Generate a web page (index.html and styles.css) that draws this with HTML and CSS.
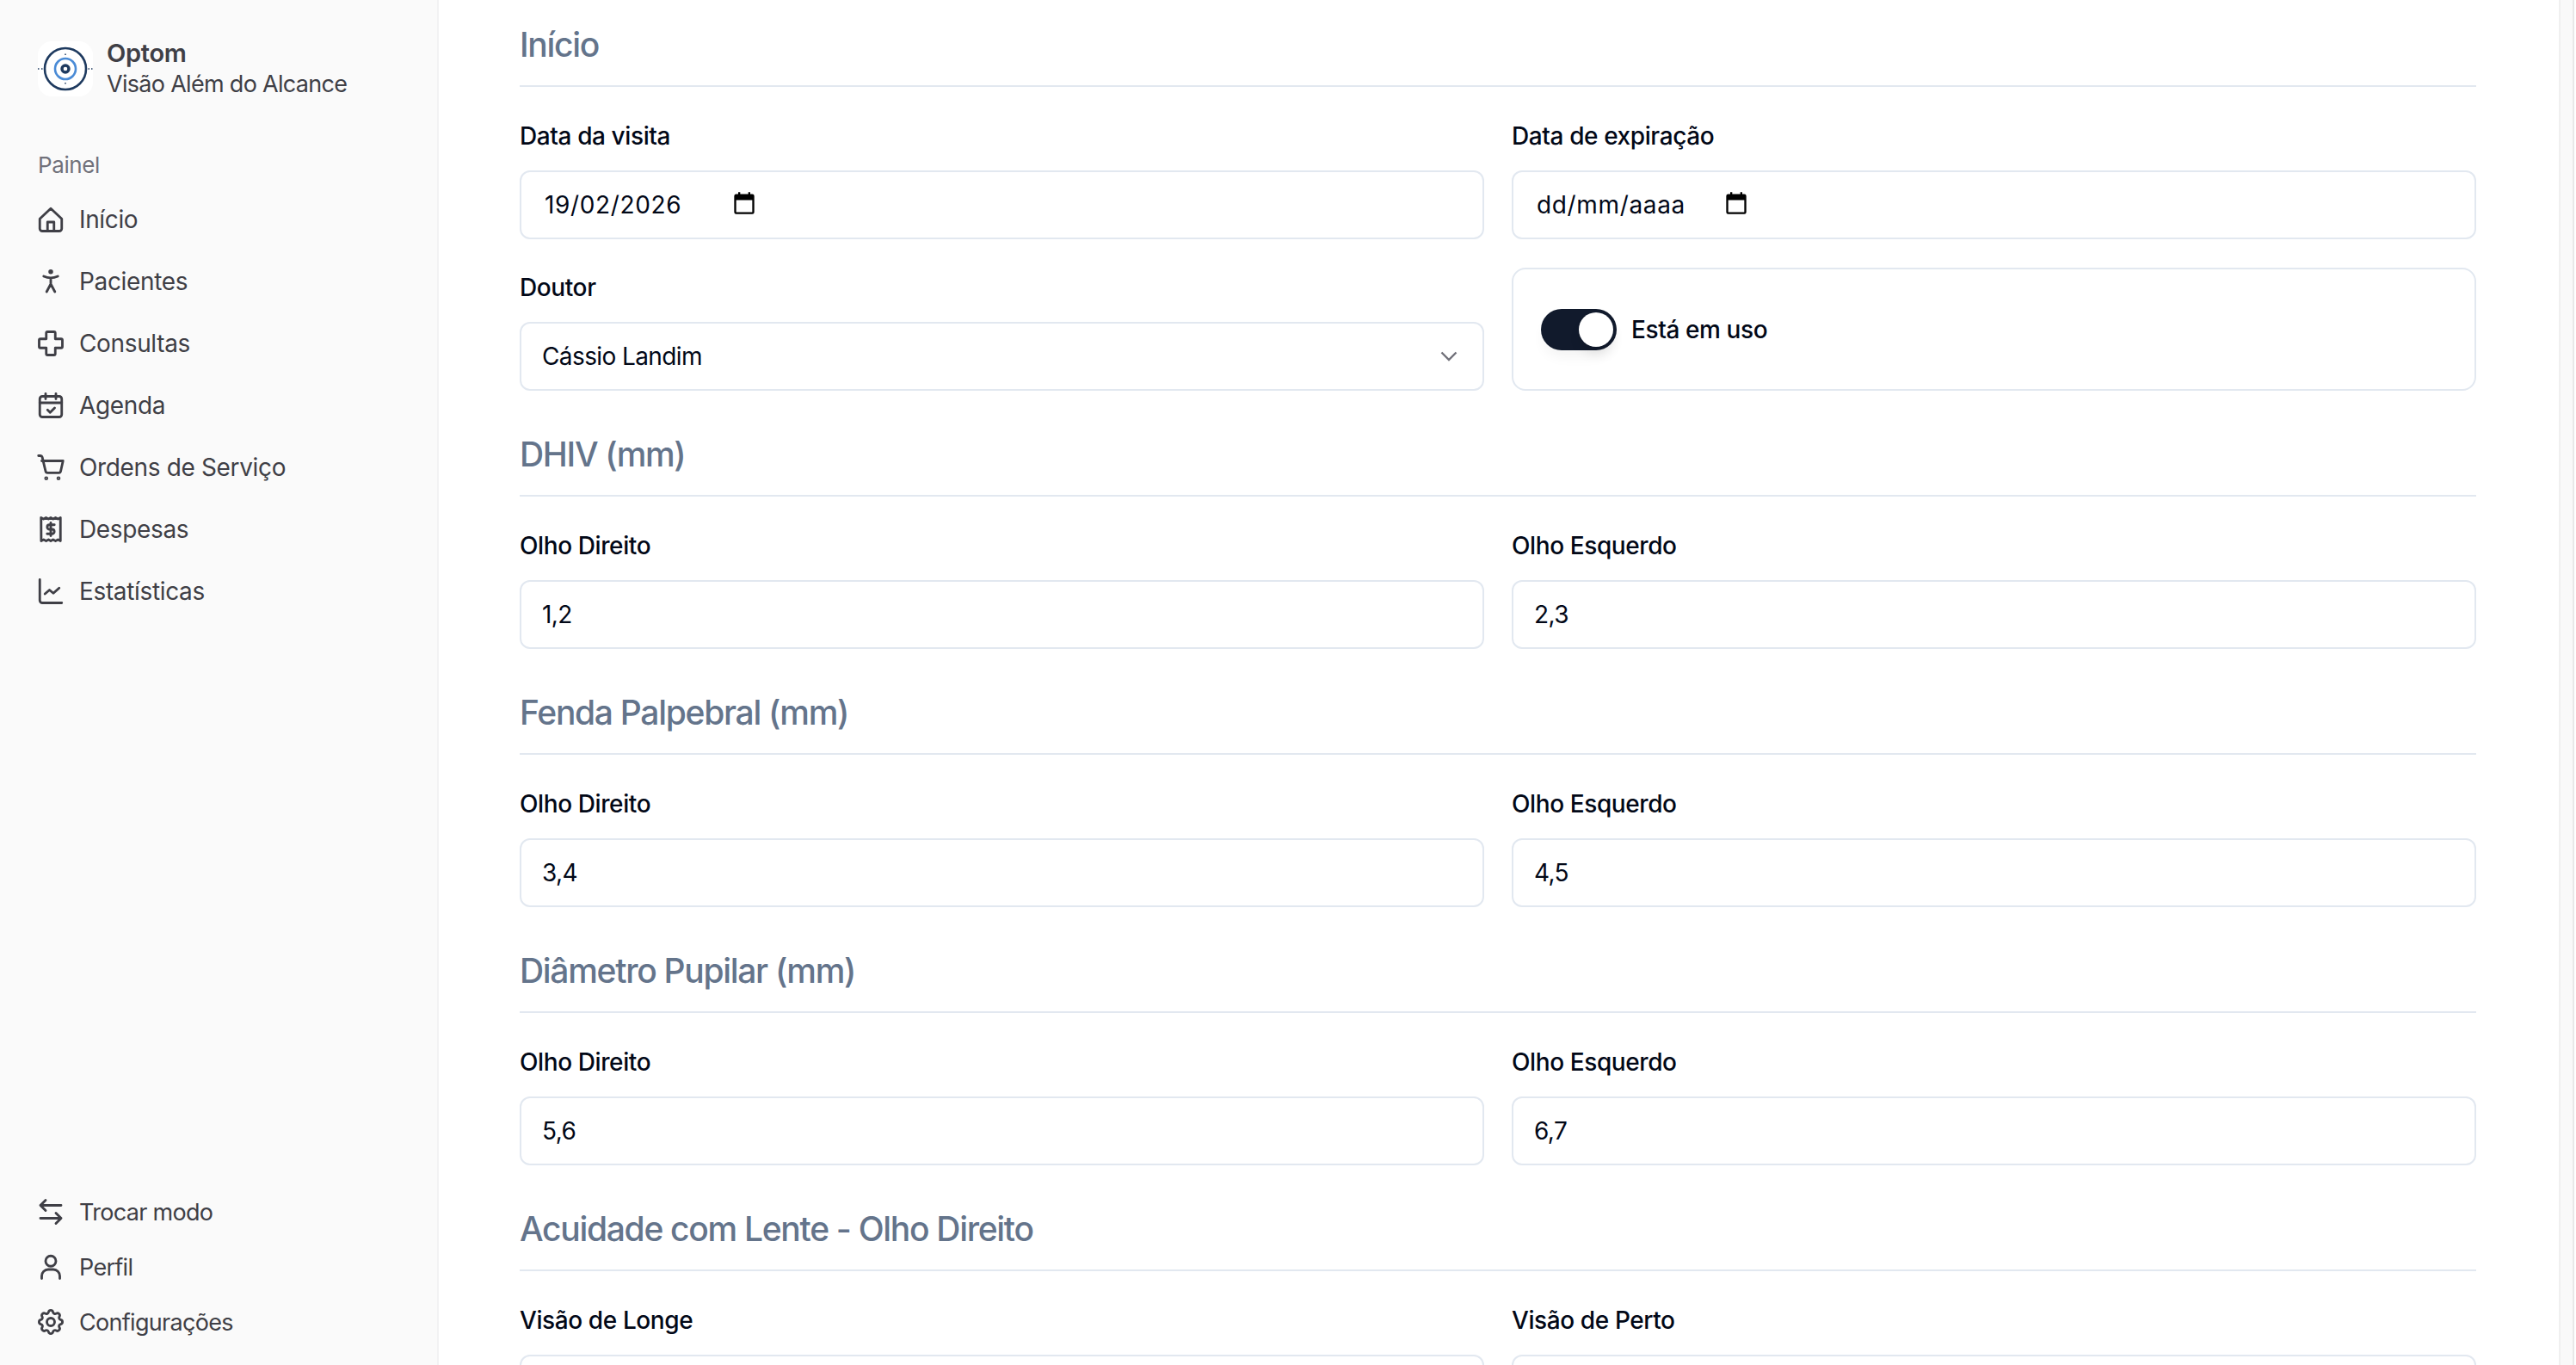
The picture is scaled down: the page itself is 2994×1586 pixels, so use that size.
FILE: index.html
```html
<!DOCTYPE html>
<html lang="pt-br">
  <head>
    <meta charset="utf-8" />
    <title>Optom</title>
    <link rel="stylesheet" href="styles.css">
  </head>
  <body>
    <div class="app">
      <aside class="sidebar">
        <div class="brand">
          <div class="logo">
            <svg viewBox="0 0 64 64" width="64" height="64" fill="none">
              <circle cx="32" cy="32" r="24" stroke="#1e3a5f" stroke-width="2.6" />
              <circle cx="32" cy="32" r="12" stroke="#4a8bd6" stroke-width="2.6" />
              <circle cx="32" cy="32" r="4" stroke="#1e3a5f" stroke-width="3.4" />
              <path d="M0 32h1.5M4 32h1.5M58.500 32h1.500M62 32h1.500M32 14.500v1.500M32 48v1.500" stroke="#1e3a5f" stroke-width="1.500" />
            </svg>
          </div>
          <div class="brand-text">
            <div class="brand-name">Optom</div>
            <div class="brand-sub">Visão Além do Alcance</div>
          </div>
        </div>

        <div class="nav-title">Painel</div>
        <nav class="nav">
          <a class="nav-item">
            <svg class="icon" viewBox="0 0 24 24"><path d="M3.500 11.500 12 3.500l8.500 8V19a2 2 0 0 1-2 2h-13a2 2 0 0 1-2-2z" /><path d="M9.500 21v-7h5v7" /></svg>
            Início
          </a>
          <a class="nav-item">
            <svg class="icon" viewBox="0 0 24 24"><circle cx="12" cy="4.500" r=".9" /><path d="M6.500 8c3.600 1.600 7.400 1.600 11 0M12 9.500v4.500M12 14 8.800 20M12 14l3.200 6" /></svg>
            Pacientes
          </a>
          <a class="nav-item">
            <svg class="icon" viewBox="0 0 24 24"><path d="M9.500 3h5a1 1 0 0 1 1 1v4.500H20a1 1 0 0 1 1 1v5a1 1 0 0 1-1 1h-4.500V20a1 1 0 0 1-1 1h-5a1 1 0 0 1-1-1v-4.500H4a1 1 0 0 1-1-1v-5a1 1 0 0 1 1-1h4.500V4a1 1 0 0 1 1-1z" /></svg>
            Consultas
          </a>
          <a class="nav-item">
            <svg class="icon" viewBox="0 0 24 24"><rect x="3.500" y="5" width="17" height="16" rx="2" /><path d="M8 3v4M16 3v4M3.500 10h17M9.500 15.500l2 2 3.500-3.500" /></svg>
            Agenda
          </a>
          <a class="nav-item">
            <svg class="icon" viewBox="0 0 24 24"><path d="M2.500 3h1.500a1.500 1.500 0 0 1 1.400 1.100L8 15a1.500 1.500 0 0 0 1.500 1.200h8.700a1.500 1.500 0 0 0 1.500-1.200L21.500 7H5" /><circle cx="8.500" cy="20.500" r=".6" /><circle cx="18" cy="20.500" r=".6" /></svg>
            Ordens de Serviço
          </a>
          <a class="nav-item">
            <svg class="icon" viewBox="0 0 24 24"><path d="M4.500 3l1.900 1 1.900-1 1.900 1L12 3l1.800 1 1.900-1 1.900 1 1.900-1v18l-1.900-1-1.900 1-1.900-1L12 21l-1.700-1-1.900 1-1.900-1-1.900 1z" /><path d="M14.800 8.500h-3.800a1.750 1.750 0 0 0 0 3.500h2a1.750 1.750 0 0 1 0 3.500H9.200M12 7v10" /></svg>
            Despesas
          </a>
          <a class="nav-item">
            <svg class="icon" viewBox="0 0 24 24"><path d="M3.500 3v16a2 2 0 0 0 2 2h15" /><path d="M7.500 14l3.500-3 3 2.500 4.500-4" /></svg>
            Estatísticas
          </a>
        </nav>

        <nav class="nav-bottom">
          <a class="nav-item small">
            <svg class="icon" viewBox="0 0 24 24"><path d="M8 3 4 7l4 4M4 7h16M16 13l4 4-4 4M20 17H4" /></svg>
            Trocar modo
          </a>
          <a class="nav-item small">
            <svg class="icon" viewBox="0 0 24 24"><circle cx="12" cy="7.500" r="4" /><path d="M5 21v-2a5 5 0 0 1 5-5h4a5 5 0 0 1 5 5v2" /></svg>
            Perfil
          </a>
          <a class="nav-item small">
            <svg class="icon" viewBox="0 0 24 24"><path d="M10.300 4.300c.4-1.800 3-1.800 3.400 0a1.700 1.700 0 0 0 2.600 1.100c1.500-.9 3.300.8 2.400 2.400a1.700 1.700 0 0 0 1 2.500c1.800.4 1.800 3 0 3.400a1.700 1.700 0 0 0-1 2.600c.9 1.500-.9 3.300-2.400 2.400a1.700 1.700 0 0 0-2.600 1c-.4 1.800-3 1.800-3.400 0a1.700 1.700 0 0 0-2.600-1c-1.500.9-3.300-.9-2.400-2.400a1.700 1.700 0 0 0-1-2.600c-1.800-.4-1.800-3 0-3.400a1.700 1.700 0 0 0 1-2.500c-.9-1.600.9-3.300 2.400-2.400a1.700 1.700 0 0 0 2.600-1.100z" /><circle cx="12" cy="12" r="3" /></svg>
            Configurações
          </a>
        </nav>
      </aside>

      <main class="main">
        <section class="section">
          <h2 class="section-title">Início</h2>
          <div class="fields">
            <div class="field">
              <label class="label">Data da visita</label>
              <div class="input date">
                <span class="date-value">19/02/2026</span>
                <svg class="picker" viewBox="0 0 24 24"><path d="M6 1h2v2h8V1h2v2h2a2 2 0 0 1 2 2v16a2 2 0 0 1-2 2H4a2 2 0 0 1-2-2V5a2 2 0 0 1 2-2h2zM4 9v12h16V9z" /></svg>
              </div>
            </div>
            <div class="field">
              <label class="label">Data de expiração</label>
              <div class="input date">
                <span class="date-value">dd/mm/aaaa</span>
                <svg class="picker" viewBox="0 0 24 24"><path d="M6 1h2v2h8V1h2v2h2a2 2 0 0 1 2 2v16a2 2 0 0 1-2 2H4a2 2 0 0 1-2-2V5a2 2 0 0 1 2-2h2zM4 9v12h16V9z" /></svg>
              </div>
            </div>
            <div class="field">
              <label class="label">Doutor</label>
              <div class="input select">
                <span>Cássio Landim</span>
                <svg class="chevron" viewBox="0 0 20 12"><path d="M1.500 1.500 10 10l8.500-8.500" /></svg>
              </div>
            </div>
            <div class="toggle-card">
              <span class="switch"><span class="thumb"></span></span>
              <span class="toggle-label">Está em uso</span>
            </div>
          </div>
        </section>

        <section class="section">
          <h2 class="section-title">DHIV (mm)</h2>
          <div class="fields">
            <div class="field"><label class="label">Olho Direito</label><input class="input" value="1,2" /></div>
            <div class="field"><label class="label">Olho Esquerdo</label><input class="input" value="2,3" /></div>
          </div>
        </section>

        <section class="section">
          <h2 class="section-title">Fenda Palpebral (mm)</h2>
          <div class="fields">
            <div class="field"><label class="label">Olho Direito</label><input class="input" value="3,4" /></div>
            <div class="field"><label class="label">Olho Esquerdo</label><input class="input" value="4,5" /></div>
          </div>
        </section>

        <section class="section">
          <h2 class="section-title">Diâmetro Pupilar (mm)</h2>
          <div class="fields">
            <div class="field"><label class="label">Olho Direito</label><input class="input" value="5,6" /></div>
            <div class="field"><label class="label">Olho Esquerdo</label><input class="input" value="6,7" /></div>
          </div>
        </section>

        <section class="section">
          <h2 class="section-title">Acuidade com Lente - Olho Direito</h2>
          <div class="fields">
            <div class="field"><label class="label">Visão de Longe</label><input class="input" /></div>
            <div class="field"><label class="label">Visão de Perto</label><input class="input" /></div>
          </div>
        </section>
      </main>

      <div class="scrollbar"></div>
    </div>
  </body>
</html>
```

FILE: styles.css
```css
html,
body {
  margin: 0;
  height: 100%;
  overflow: hidden;
  background: #fff;
  font-family: Inter, "Noto Sans", sans-serif;
  letter-spacing: -0.4px;
}

.app {
  display: flex;
  height: 1586px;
  overflow: hidden;
}

/* sidebar */
.sidebar {
  width: 510px;
  flex: none;
  box-sizing: border-box;
  display: flex;
  flex-direction: column;
  padding: 48px 44px 18px;
  background: #fafafa;
  border-right: 2px solid #f2f2f3;
  color: #3f3f46;
}

.brand {
  display: flex;
  align-items: center;
  gap: 16px;
  height: 64px;
  margin-bottom: 60px;
}

.logo {
  width: 64px;
  height: 64px;
  background: #fff;
  border-radius: 16px;
}

.logo svg {
  display: block;
}

.brand-text {
  font-size: 27px;
  line-height: 36px;
  letter-spacing: -0.7px;
}

.brand-name {
  font-size: 29px;
  font-weight: 600;
  letter-spacing: -0.3px;
}

.nav-title {
  font-size: 26px;
  line-height: 40px;
  color: #71717a;
  margin-bottom: 7px;
}

.nav {
  flex: 1;
}

.nav-item {
  display: flex;
  align-items: center;
  gap: 15px;
  height: 72px;
  font-size: 28px;
  letter-spacing: -0.35px;
}

.nav-item.small {
  height: 64px;
  font-size: 27px;
  letter-spacing: -0.7px;
}

.icon {
  width: 36px;
  height: 36px;
  flex: none;
  margin-left: -3px;
  fill: none;
  stroke: #3f3f46;
  stroke-width: 1.9;
  stroke-linecap: round;
  stroke-linejoin: round;
}

/* form */
.main {
  flex: 1;
  min-width: 0;
  padding: 24px 96px 0 94px;
}

.section {
  margin-bottom: 46px;
}

.section-title {
  margin: 0 0 34px;
  padding-bottom: 19px;
  border-bottom: 2px solid #e2e8f0;
  font-size: 39px;
  line-height: 56px;
  font-weight: 500;
  letter-spacing: -1.3px;
  color: #64748b;
}

.fields {
  display: grid;
  grid-template-columns: 1fr 1fr;
  gap: 33px 32px;
}

.label {
  display: block;
  margin: 3px 0 20px;
  font-size: 28px;
  line-height: 40px;
  font-weight: 500;
  color: #020817;
}

.input {
  display: flex;
  align-items: center;
  width: 100%;
  height: 80px;
  box-sizing: border-box;
  padding: 0 24px;
  background: #fff;
  border: 2px solid #e2e8f0;
  border-radius: 12px;
  font: inherit;
  font-size: 28px;
  letter-spacing: -0.6px;
  color: #020817;
}

.date-value {
  width: 218px;
  padding-left: 3px;
  letter-spacing: 0.65px;
}

.picker {
  width: 28px;
  height: 28px;
  margin-bottom: 4px;
  fill: #000;
}

.select {
  justify-content: space-between;
}

.chevron {
  width: 20px;
  height: 12px;
  margin-right: 5px;
  fill: none;
  stroke: #71717a;
  stroke-width: 2.4;
}

.toggle-card {
  display: flex;
  align-items: center;
  gap: 17px;
  padding: 0 32px;
  background: #fff;
  border: 2px solid #e2e8f0;
  border-radius: 16px;
  font-size: 28px;
  font-weight: 500;
  color: #020817;
}

.switch {
  display: flex;
  justify-content: flex-end;
  align-items: center;
  width: 88px;
  height: 48px;
  box-sizing: border-box;
  padding: 4px;
  background: #111a2c;
  border-radius: 24px;
  box-shadow: 0 10px 15px -3px rgba(0, 0, 0, 0.05);
}

.thumb {
  width: 40px;
  height: 40px;
  background: #fff;
  border-radius: 50%;
  box-shadow: 0 10px 15px -3px rgba(0, 0, 0, 0.1);
}

.scrollbar {
  width: 14px;
  flex: none;
  margin-right: 2px;
  background: #f9f9f9;
  border-left: 2px solid #f0f0f0;
  border-right: 2px solid #e8e8e8;
}
```
